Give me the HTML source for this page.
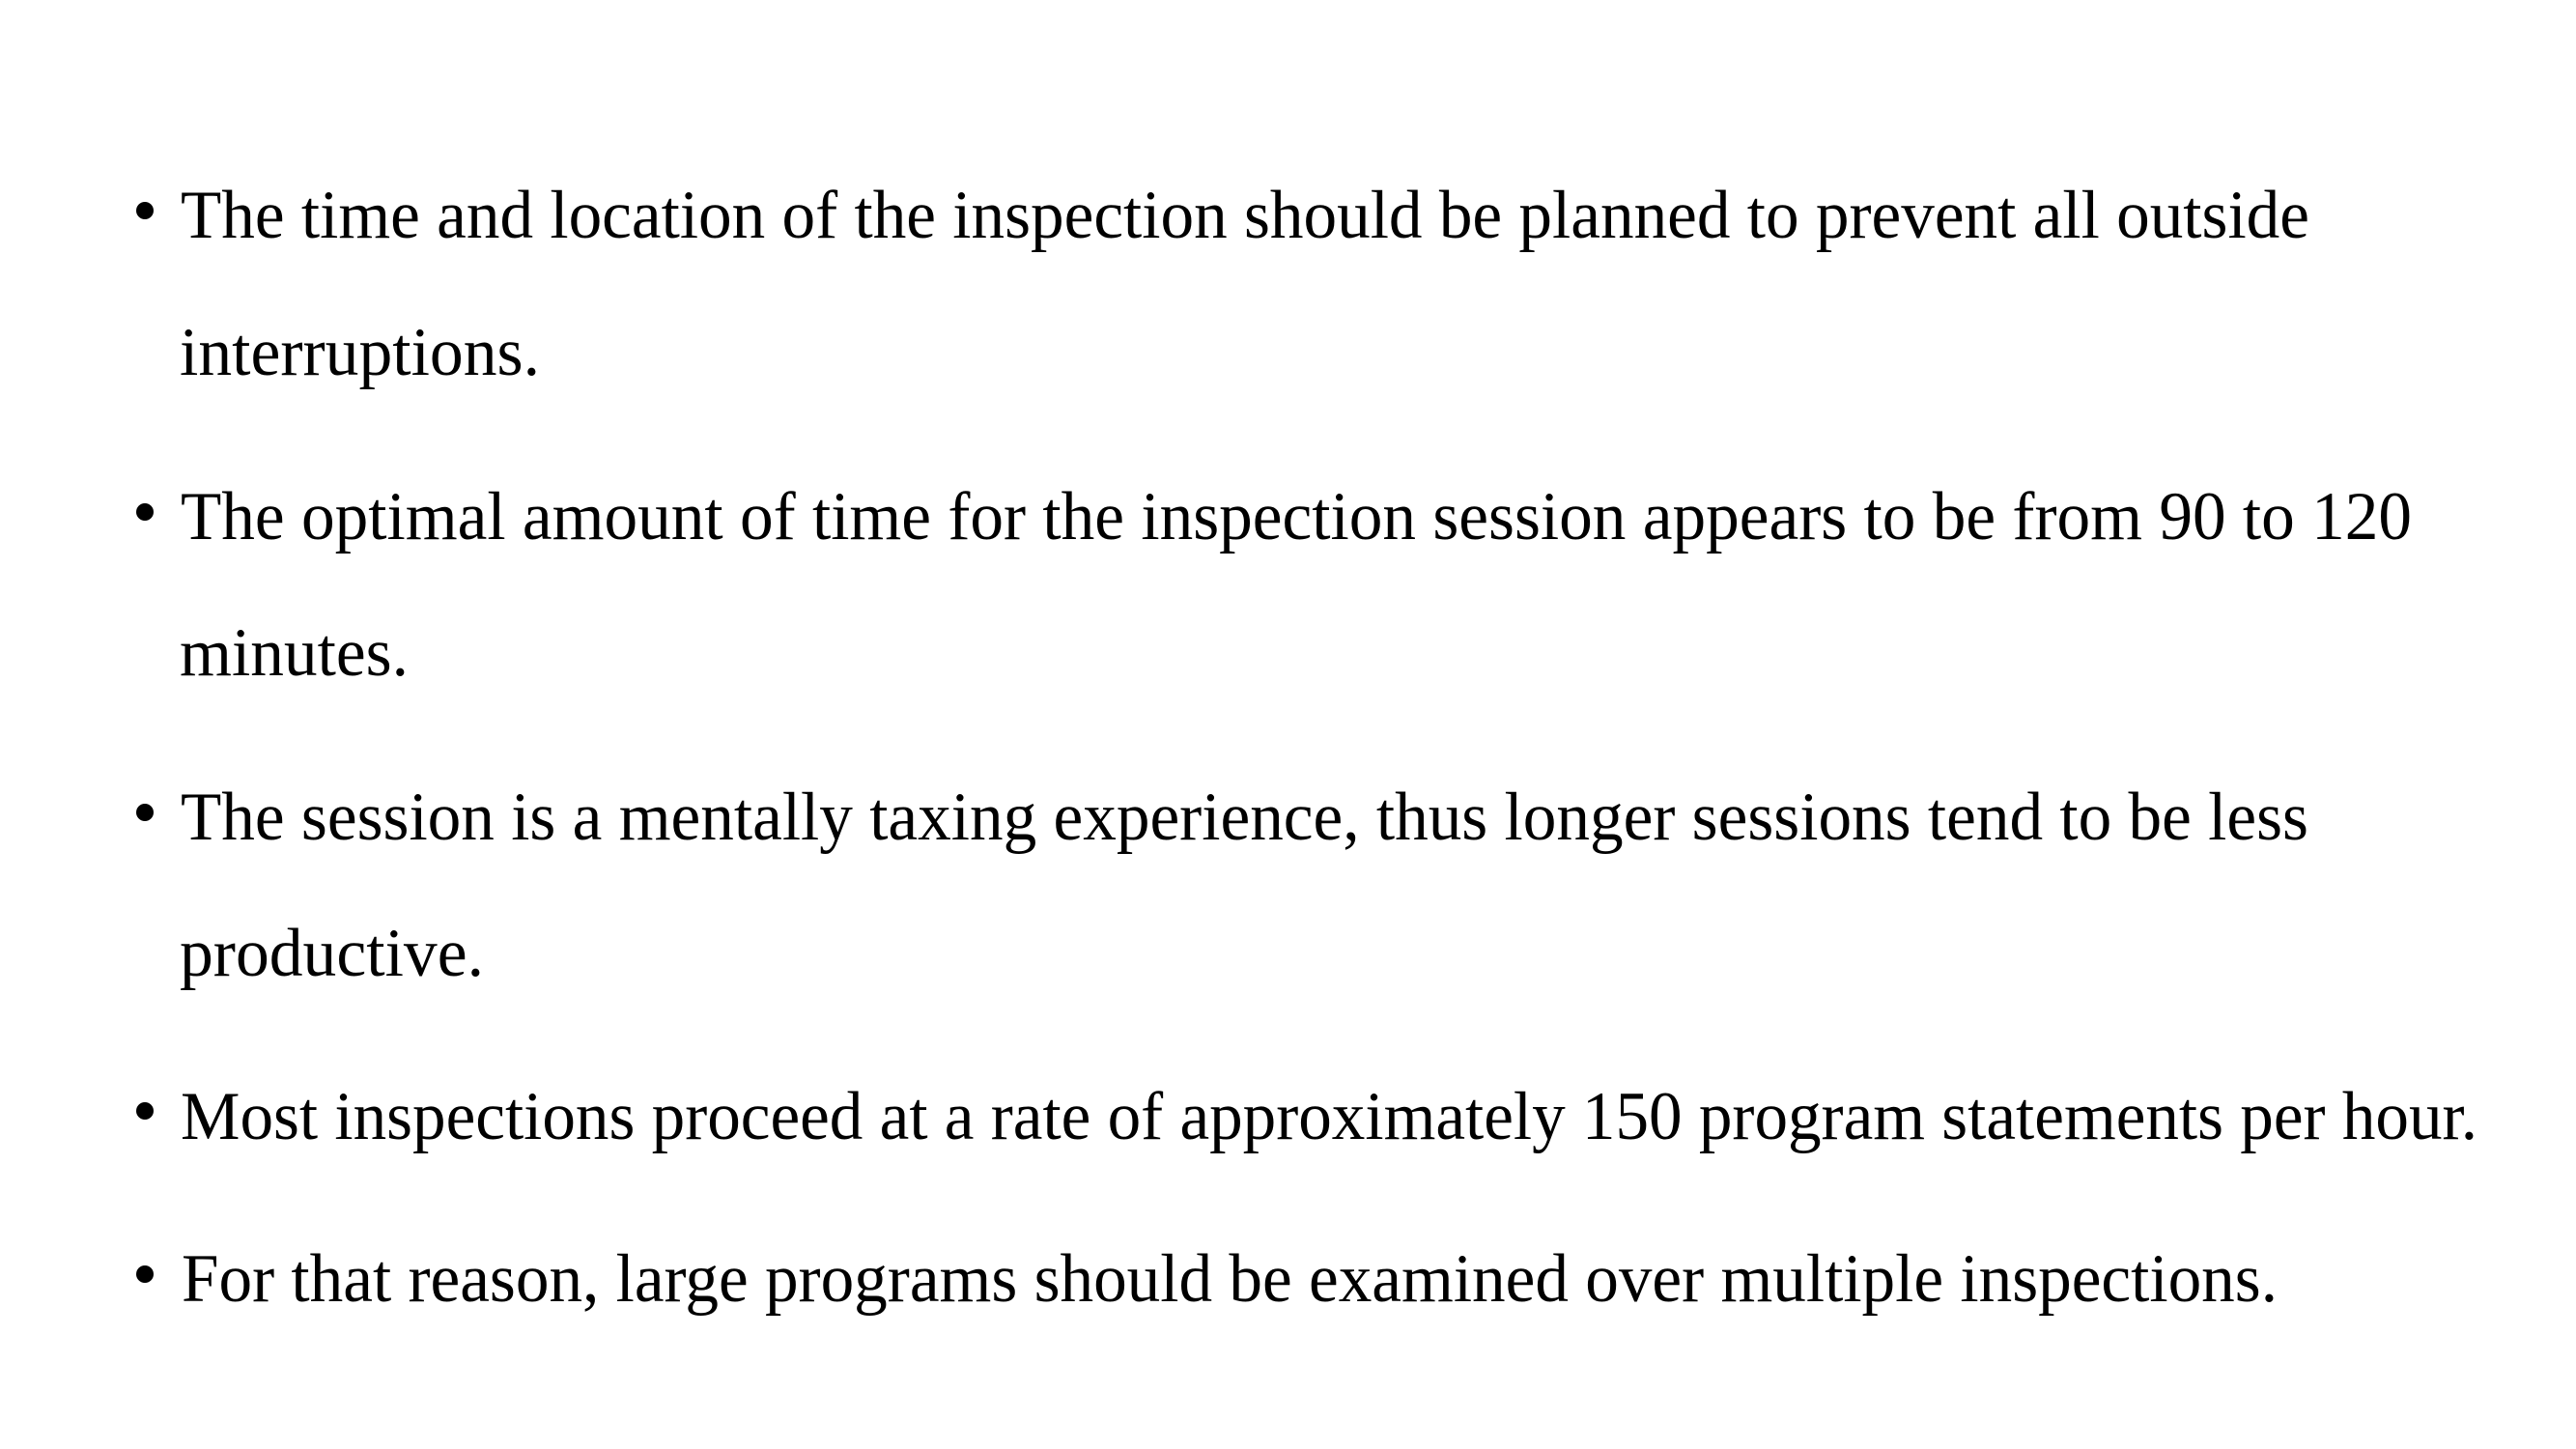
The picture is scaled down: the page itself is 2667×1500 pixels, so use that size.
<!DOCTYPE html>
<html><head><meta charset="utf-8"><style>
html,body{margin:0;padding:0;background:#fff;width:2667px;height:1500px;overflow:hidden}
text{font-family:"Liberation Serif","Times New Roman",serif;font-size:71px;fill:#000}
</style></head><body>
<svg width="2667" height="1500" xmlns="http://www.w3.org/2000/svg">
<g fill="#000">
<circle cx="150" cy="218" r="9"/>
<circle cx="150" cy="530" r="9"/>
<circle cx="150" cy="841" r="9"/>
<circle cx="150" cy="1150" r="9"/>
<circle cx="150" cy="1319" r="9"/>
</g>
<text x="187" y="246" textLength="2204" lengthAdjust="spacingAndGlyphs">The time and location of the inspection should be planned to prevent all outside</text>
<text x="186" y="388" textLength="373" lengthAdjust="spacingAndGlyphs">interruptions.</text>
<text x="187" y="558" textLength="2310" lengthAdjust="spacingAndGlyphs">The optimal amount of time for the inspection session appears to be from 90 to 120</text>
<text x="186" y="699" textLength="237" lengthAdjust="spacingAndGlyphs">minutes.</text>
<text x="187" y="869" textLength="2203" lengthAdjust="spacingAndGlyphs">The session is a mentally taxing experience, thus longer sessions tend to be less</text>
<text x="186" y="1010" textLength="315" lengthAdjust="spacingAndGlyphs">productive.</text>
<text x="187" y="1179" textLength="2378" lengthAdjust="spacingAndGlyphs">Most inspections proceed at a rate of approximately 150 program statements per hour.</text>
<text x="188" y="1347" textLength="2170" lengthAdjust="spacingAndGlyphs">For that reason, large programs should be examined over multiple inspections.</text>
</svg>
</body></html>
